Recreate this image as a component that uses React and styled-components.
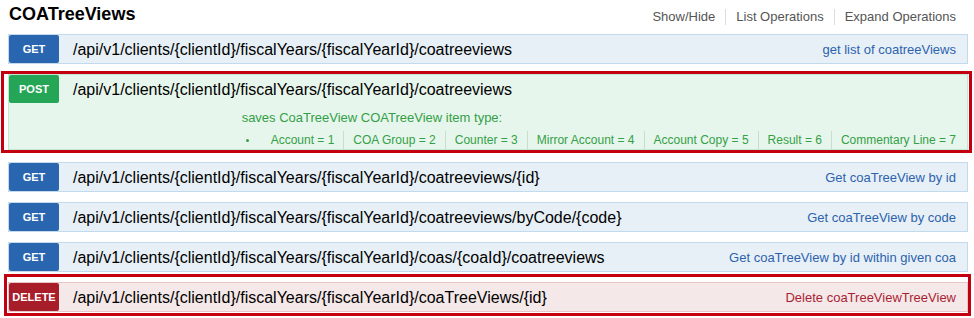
import React from "react";
import styled, { createGlobalStyle } from "styled-components";

const GlobalStyle = createGlobalStyle`
  html, body { margin: 0; padding: 0; background: #fff; }
  body { font-family: "Liberation Sans", Arial, sans-serif; }
  * { box-sizing: border-box; }
`;

const METHODS = {
  get: { bg: "#e7f0f7", border: "#c3d9ec", badge: "#2a66b0", text: "#2d62ad" },
  post: { bg: "#e7f6ec", border: "#c3e8d1", badge: "#25a556", text: "#33a047" },
  delete: { bg: "#f5e8e8", border: "#e8c6c7", badge: "#a81d2a", text: "#a91f35" },
};

const Page = styled.div`
  padding: 0 6px 0 8px;
  width: 974px;
`;

const Header = styled.div`
  display: flex;
  justify-content: space-between;
  align-items: flex-start;
  height: 34px;
  padding: 0 12px 0 1px;
`;

const Title = styled.h2`
  margin: 4px 0 0;
  font-size: 18px;
  line-height: 20px;
  font-weight: bold;
  color: #000;
`;

const Links = styled.div`
  display: flex;
  margin-top: 9px;
`;

const HeaderLink = styled.a`
  font-size: 13px;
  line-height: 16px;
  color: #555;
  text-decoration: none;
  padding: 0 10px;
  border-right: 1px solid #ddd;
  &:last-child {
    border-right: none;
    padding-right: 0;
  }
`;

const List = styled.div`
  display: flex;
  flex-direction: column;
  gap: 10px;
`;

const Highlight = styled.div`
  border: 3px solid #c40010;
  margin: ${(p) => p.$margin};
  padding: ${(p) => p.$padding};
`;

const Block = styled.div`
  background: ${(p) => METHODS[p.$method].bg};
  border: 1px solid ${(p) => METHODS[p.$method].border};
`;

const Heading = styled.div`
  display: flex;
  align-items: center;
  height: 28px;
`;

const Badge = styled.span`
  flex: none;
  width: 50px;
  height: 28px;
  display: flex;
  align-items: center;
  justify-content: center;
  background: ${(p) => METHODS[p.$method].badge};
  color: #fff;
  font-size: 11px;
  font-weight: bold;
  border-radius: 2px;
  text-transform: uppercase;
`;

const Path = styled.span`
  margin-left: 14px;
  padding-top: 1px;
  font-size: 16px;
  color: #000;
  white-space: nowrap;
`;

const Summary = styled.span`
  margin-left: auto;
  padding-right: 11px;
  padding-top: 1px;
  font-size: 13px;
  color: ${(p) => METHODS[p.$method].text};
  white-space: nowrap;
`;

const Content = styled.div`
  display: flex;
  justify-content: flex-end;
  padding: 7px 11px 0 0;
  color: ${(p) => METHODS[p.$method].text};
`;

const Notes = styled.div`
  display: flex;
  flex-direction: column;
`;

const Note = styled.p`
  margin: 0;
  font-size: 13px;
  line-height: 16px;
`;

const Items = styled.ul`
  display: flex;
  margin: 5px 0 0;
  padding: 0;
  list-style: none;
  font-size: 12px;
  line-height: 18px;
`;

const BulletItem = styled.li`
  width: 20px;
  display: flex;
  align-items: center;
  &::before {
    content: "";
    display: block;
    width: 3px;
    height: 3px;
    border-radius: 50%;
    background: currentColor;
    margin-left: 4px;
  }
`;

const Item = styled.li`
  padding: 0 9px;
  border-right: 1px solid #c8ddcc;
  white-space: nowrap;
  &:last-child {
    border-right: none;
    padding-right: 0;
  }
`;

function Operation({ method, path, summary, children }) {
  return (
    <Block $method={method}>
      <Heading>
        <Badge $method={method}>{method}</Badge>
        <Path>{path}</Path>
        {summary && <Summary $method={method}>{summary}</Summary>}
      </Heading>
      {children}
    </Block>
  );
}

const base = "/api/v1/clients/{clientId}/fiscalYears/{fiscalYearId}";
const types = [
  "Account = 1",
  "COA Group = 2",
  "Counter = 3",
  "Mirror Account = 4",
  "Account Copy = 5",
  "Result = 6",
  "Commentary Line = 7",
];

export default function App() {
  return (
    <Page>
      <GlobalStyle />
      <Header>
        <Title>COATreeViews</Title>
        <Links>
          <HeaderLink>Show/Hide</HeaderLink>
          <HeaderLink>List Operations</HeaderLink>
          <HeaderLink>Expand Operations</HeaderLink>
        </Links>
      </Header>
      <List>
        <Operation method="get" path={`${base}/coatreeviews`} summary="get list of coatreeViews" />
        <Highlight $margin="-3px -4px -1px -7px" $padding="0 1px 0 4px">
          <Operation method="post" path={`${base}/coatreeviews`}>
            <Content $method="post">
              <Notes>
                <Note>saves CoaTreeView COATreeView item type:</Note>
                <Items>
                  <BulletItem />
                  {types.map((t) => (
                    <Item key={t}>{t}</Item>
                  ))}
                </Items>
              </Notes>
            </Content>
          </Operation>
        </Highlight>
        <Operation method="get" path={`${base}/coatreeviews/{id}`} summary="Get coaTreeView by id" />
        <Operation method="get" path={`${base}/coatreeviews/byCode/{code}`} summary="Get coaTreeView by code" />
        <Operation method="get" path={`${base}/coas/{coaId}/coatreeviews`} summary="Get coaTreeView by id within given coa" />
        <Highlight $margin="-8px -3px 0 -4px" $padding="5px 0 1px 1px">
          <Operation method="delete" path={`${base}/coaTreeViews/{id}`} summary="Delete coaTreeViewTreeView" />
        </Highlight>
      </List>
    </Page>
  );
}
